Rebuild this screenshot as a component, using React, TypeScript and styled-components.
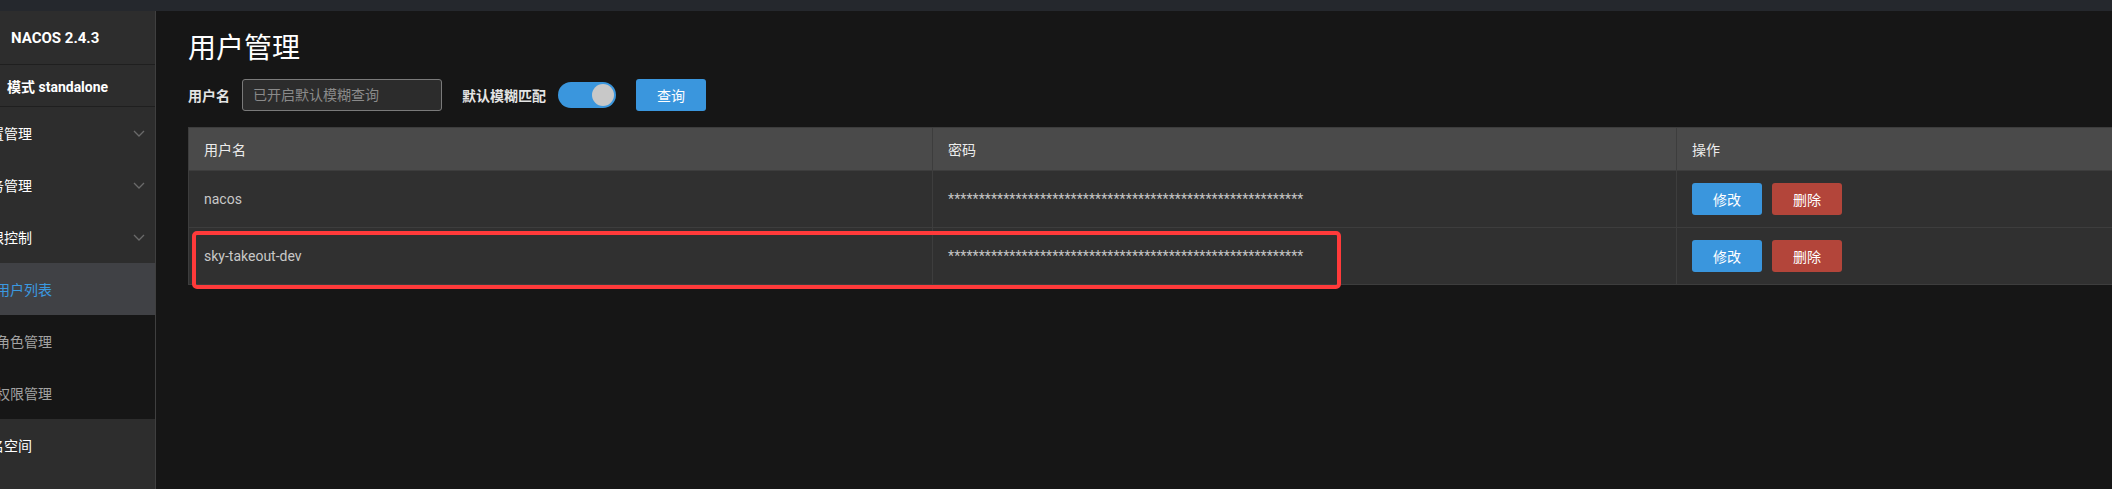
import React from "react";
import styled, { createGlobalStyle } from "styled-components";

const GlobalStyle = createGlobalStyle`
  html, body { margin: 0; padding: 0; background: #161616; overflow: hidden; }
  body { font-family: Roboto, "Noto Sans CJK SC", sans-serif; font-size: 14px; color: #ddd; }
  * { box-sizing: border-box; }
`;

const Page = styled.div`
  width: 2112px;
  height: 489px;
  display: flex;
  flex-direction: column;
  overflow: hidden;
`;

const TopBar = styled.div`
  height: 11px;
  flex: none;
  background: #25282d;
`;

const Body = styled.div`
  flex: 1;
  display: flex;
  min-height: 0;
`;

const Sidebar = styled.aside`
  width: 156px;
  flex: none;
  background: #2d2d2d;
  border-right: 1px solid #3f3f3f;
  overflow: hidden;
  display: flex;
  flex-direction: column;
`;

const Brand = styled.div`
  height: 54px;
  display: flex;
  align-items: center;
  padding-left: 11px;
  font-weight: 700;
  font-size: 15px;
  color: #fff;
  border-bottom: 1px solid #1f1f1f;
  white-space: nowrap;
`;

const Mode = styled.div`
  height: 42px;
  display: flex;
  align-items: center;
  padding-left: 7px;
  font-weight: 700;
  font-size: 14px;
  color: #fff;
  border-bottom: 1px solid #1f1f1f;
  white-space: nowrap;
`;

const MenuItem = styled.div<{ $sub?: boolean; $active?: boolean }>`
  height: 52px;
  flex: none;
  display: flex;
  align-items: center;
  padding-right: 10px;
  white-space: nowrap;
  font-size: 14px;
  background: ${(p) => (p.$active ? "#404145" : p.$sub ? "#161616" : "#2d2d2d")};
  color: ${(p) => (p.$active ? "#3b99e0" : p.$sub ? "#a3a3a3" : "#fff")};
`;

const MenuLabel = styled.span<{ $sub?: boolean }>`
  margin-left: ${(p) => (p.$sub ? "-4px" : "-24px")};
`;

const Chevron = styled.svg`
  margin-left: auto;
  width: 12px;
  height: 7px;
`;

const Main = styled.main`
  flex: 1;
  min-width: 0;
  padding-left: 32px;
  background: #161616;
  display: flex;
  flex-direction: column;
`;

const Title = styled.h1`
  margin: 18px 0 0;
  height: 40px;
  line-height: 40px;
  font-size: 28px;
  font-weight: 400;
  color: #fff;
`;

const Form = styled.div`
  margin-top: 10px;
  height: 32px;
  display: flex;
  align-items: center;
`;

const Label = styled.span`
  font-size: 14px;
  font-weight: 600;
  color: #e4e4e4;
  margin-right: 12px;
`;

const Input = styled.input`
  width: 200px;
  height: 32px;
  background: #2c2c2c;
  border: 1px solid #7a7a7a;
  border-radius: 3px;
  padding: 0 10px;
  font: inherit;
  font-size: 14px;
  color: #ddd;
  margin-right: 20px;
  outline: none;
  &::placeholder { color: #8a8a8a; }
`;

const Switch = styled.div`
  width: 58px;
  height: 26px;
  border-radius: 13px;
  background: #3a96dd;
  display: flex;
  align-items: center;
  justify-content: flex-end;
  padding-right: 2px;
  margin-right: 20px;
`;

const Knob = styled.div`
  width: 22px;
  height: 22px;
  border-radius: 50%;
  background: #c8c8c8;
`;

const Btn = styled.button<{ $danger?: boolean }>`
  width: 70px;
  height: 32px;
  border: none;
  border-radius: 3px;
  background: ${(p) => (p.$danger ? "#b3453a" : "#3a96dd")};
  color: #fff;
  font: inherit;
  font-size: 14px;
  padding: 0;
`;

const TableWrap = styled.div`
  position: relative;
  margin-top: 16px;
  width: 2233px;
`;

const Table = styled.div`
  border-left: 1px solid #3d3d3d;
  border-top: 1px solid #3d3d3d;
`;

const Row = styled.div<{ $head?: boolean }>`
  display: grid;
  grid-template-columns: 744px 744px 744px;
  height: ${(p) => (p.$head ? 43 : 57)}px;
  background: ${(p) => (p.$head ? "#4a4a4a" : "#303030")};
  border-bottom: 1px solid #3d3d3d;
  color: ${(p) => (p.$head ? "#ececec" : "#c8c8c8")};
`;

const Cell = styled.div`
  padding: 0 15px;
  display: flex;
  align-items: center;
  gap: 10px;
  border-right: 1px solid #3d3d3d;
  font-size: 14px;
  white-space: nowrap;
`;

const Stars = styled.span`
  color: #c4c4c4;
  letter-spacing: 0.1px;
`;

const Highlight = styled.div`
  position: absolute;
  left: 4px;
  top: 104px;
  width: 1149px;
  height: 58px;
  border: 4px solid #ff3a3a;
  border-radius: 5px;
  pointer-events: none;
`;

const ChevronIcon = () => (
  <Chevron viewBox="0 0 12 7">
    <polyline points="1,1 6,6 11,1" fill="none" stroke="#6a6a6a" strokeWidth="1.3" />
  </Chevron>
);

const users = ["nacos", "sky-takeout-dev"];
const stars = "*".repeat(58);

export default function App() {
  return (
    <Page>
      <GlobalStyle />
      <TopBar />
      <Body>
        <Sidebar>
          <Brand>NACOS 2.4.3</Brand>
          <Mode>模式 standalone</Mode>
          <MenuItem>
            <MenuLabel>配置管理</MenuLabel>
            <ChevronIcon />
          </MenuItem>
          <MenuItem>
            <MenuLabel>服务管理</MenuLabel>
            <ChevronIcon />
          </MenuItem>
          <MenuItem>
            <MenuLabel>权限控制</MenuLabel>
            <ChevronIcon />
          </MenuItem>
          <MenuItem $sub $active>
            <MenuLabel $sub>用户列表</MenuLabel>
          </MenuItem>
          <MenuItem $sub>
            <MenuLabel $sub>角色管理</MenuLabel>
          </MenuItem>
          <MenuItem $sub>
            <MenuLabel $sub>权限管理</MenuLabel>
          </MenuItem>
          <MenuItem>
            <MenuLabel>命名空间</MenuLabel>
          </MenuItem>
        </Sidebar>
        <Main>
          <Title>用户管理</Title>
          <Form>
            <Label>用户名</Label>
            <Input placeholder="已开启默认模糊查询" />
            <Label>默认模糊匹配</Label>
            <Switch>
              <Knob />
            </Switch>
            <Btn>查询</Btn>
          </Form>
          <TableWrap>
            <Table>
              <Row $head>
                <Cell>用户名</Cell>
                <Cell>密码</Cell>
                <Cell>操作</Cell>
              </Row>
              {users.map((u) => (
                <Row key={u}>
                  <Cell>{u}</Cell>
                  <Cell>
                    <Stars>{stars}</Stars>
                  </Cell>
                  <Cell>
                    <Btn>修改</Btn>
                    <Btn $danger>删除</Btn>
                  </Cell>
                </Row>
              ))}
            </Table>
            <Highlight />
          </TableWrap>
        </Main>
      </Body>
    </Page>
  );
}
